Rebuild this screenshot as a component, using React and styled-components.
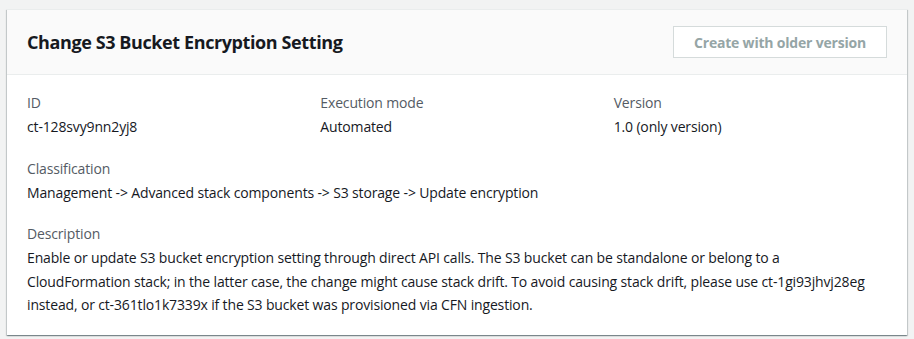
import styled, { createGlobalStyle } from "styled-components";

const Global = createGlobalStyle`
  body {
    margin: 0;
    background: #f2f3f3;
    font-family: "Open Sans", "Noto Sans", sans-serif;
  }
`;

const App = () => {
  return (
    <Page>
      <Global />
      <Card>
        <Header>
          <Title>Change S3 Bucket Encryption Setting</Title>
          <Button disabled>Create with older version</Button>
        </Header>
        <Body>
          <Columns>
            <Field>
              <Label>ID</Label>
              <Value>ct-128svy9nn2yj8</Value>
            </Field>
            <Field>
              <Label>Execution mode</Label>
              <Value>Automated</Value>
            </Field>
            <Field>
              <Label>Version</Label>
              <Value>1.0 (only version)</Value>
            </Field>
          </Columns>
          <Field>
            <Label>Classification</Label>
            <Value>
              Management -&gt; Advanced stack components -&gt; S3 storage -&gt; Update encryption
            </Value>
          </Field>
          <Field>
            <Label>Description</Label>
            <Value $narrow>
              Enable or update S3 bucket encryption setting through direct API calls. The S3 bucket
              can be standalone or belong to a CloudFormation stack; in the latter case, the change
              might cause stack drift. To avoid causing stack drift, please use ct-1gi93jhvj28eg
              instead, or ct-361tlo1k7339x if the S3 bucket was provisioned via CFN ingestion.
            </Value>
          </Field>
        </Body>
      </Card>
    </Page>
  );
};

export default App;

const Page = styled.div`
  padding: 9px 7px 6px 7px;
`;

const Card = styled.div`
  background: #fff;
  border-top: 1px solid #eaeded;
  box-shadow: 0 1px 1px 0 rgba(0, 28, 36, 0.3), 1px 1px 1px 0 rgba(0, 28, 36, 0.15),
    -1px 1px 1px 0 rgba(0, 28, 36, 0.15);
`;

const Header = styled.div`
  display: flex;
  align-items: center;
  justify-content: space-between;
  height: 64px;
  padding: 0 20px 0 20px;
  background: #fafafa;
  border-bottom: 1px solid #eaeded;
`;

const Title = styled.h2`
  margin: 0;
  font-size: 18px;
  font-weight: 700;
  letter-spacing: -0.4px;
  color: #16191f;
`;

const Button = styled.button`
  width: 214px;
  height: 32px;
  border: 1px solid #d5dbdb;
  background: #fff;
  color: #95a5a6;
  font-family: inherit;
  font-size: 14px;
  font-weight: 700;
  letter-spacing: -0.2px;
`;

const Body = styled.div`
  display: flex;
  flex-direction: column;
  gap: 18px;
  padding: 16px 20px 18px 20px;
`;

const Columns = styled.div`
  display: grid;
  grid-template-columns: repeat(3, 1fr);
  gap: 20px;
`;

const Field = styled.div`
  display: flex;
  flex-direction: column;
`;

const Label = styled.div`
  font-size: 14px;
  line-height: 24px;
  letter-spacing: -0.15px;
  color: #545b64;
`;

const Value = styled.div`
  max-width: ${(p) => (p.$narrow ? "850px" : "none")};
  font-size: 14px;
  line-height: 23.5px;
  letter-spacing: -0.15px;
  color: #16191f;
`;
